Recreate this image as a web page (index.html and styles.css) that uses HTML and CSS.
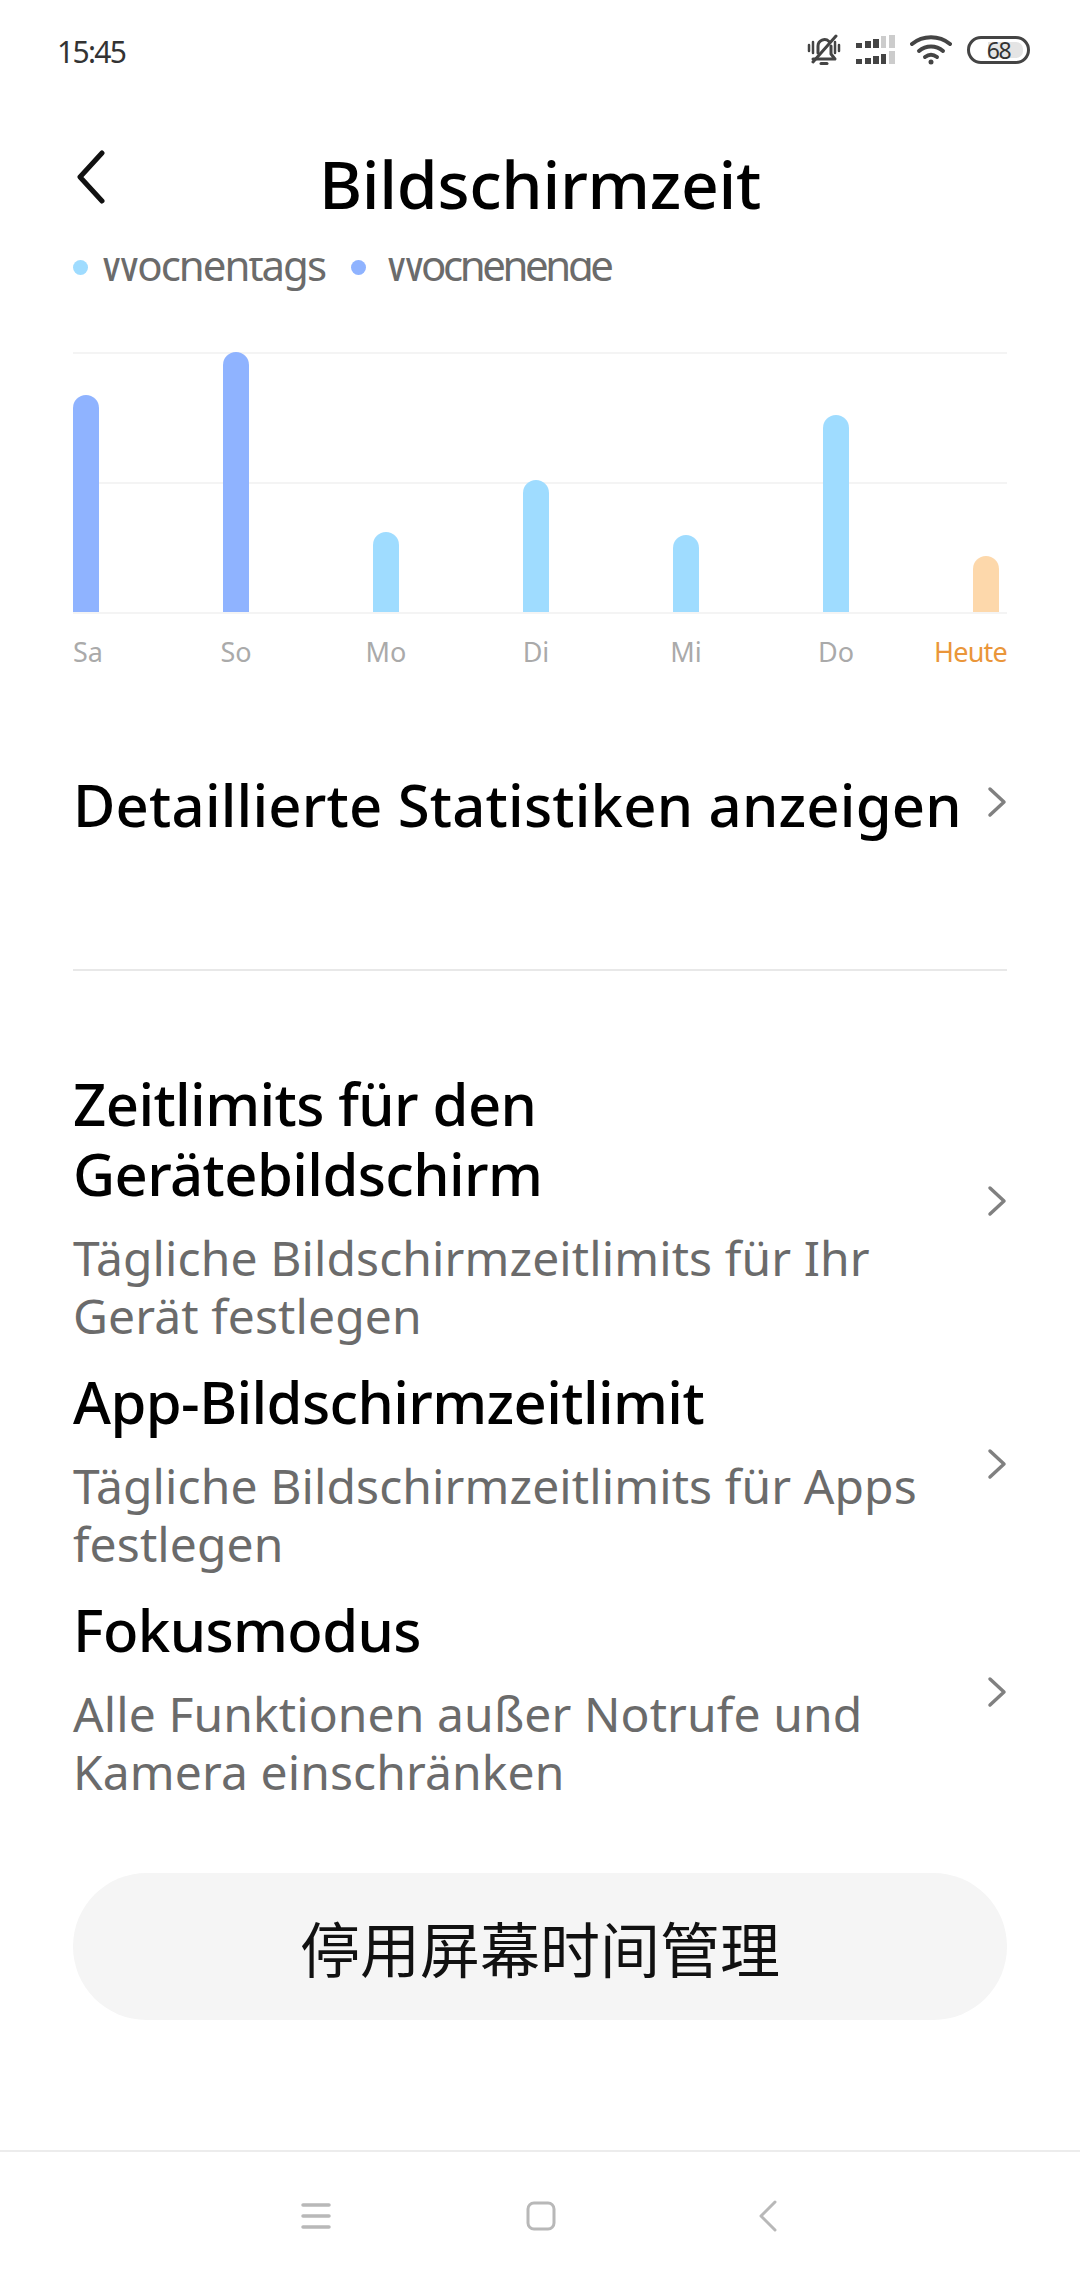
FILE: index.html
```html
<!DOCTYPE html>
<html lang="de">
<head>
    <meta charset="UTF-8">
    <title>Bildschirmzeit</title>
    <link rel="stylesheet" href="styles.css">
</head>
<body>
    <div class="page">
        <div class="status-bar">
            <span class="time">15:45</span>
            <div class="status-icons">
                <svg class="icon-bell" width="34" height="32" viewBox="0 0 34 32" fill="none" stroke="#444" stroke-width="3" stroke-linecap="round" stroke-linejoin="round">
                    <path d="M11 19v-7a6.500 6.500 0 0 1 11-4.500M24 12v8l4 5H6"/>
                    <path d="M6 28 29 2"/>
                    <path d="M14 29.500h6"/>
                    <path d="M2 11v6M32 11v6M6 8v11M28 8v11" stroke-width="2.500"/>
                </svg>
                <svg class="icon-signal" width="39" height="30" viewBox="0 0 39 30">
                    <rect x="0" y="8" width="6" height="5" fill="#444"/><rect x="9" y="6" width="6" height="7" fill="#444"/><rect x="17" y="4" width="6" height="9" fill="#444"/><rect x="25" y="1" width="5" height="12" fill="#ccc"/><rect x="33" y="0" width="6" height="13" fill="#ccc"/>
                    <rect x="0" y="24" width="6" height="5" fill="#444"/><rect x="9" y="23" width="6" height="6" fill="#444"/><rect x="17" y="21" width="6" height="8" fill="#444"/><rect x="25" y="19" width="5" height="10" fill="#444"/><rect x="33" y="16" width="6" height="13" fill="#ccc"/>
                </svg>
                <svg class="icon-wifi" width="42" height="31" viewBox="0 0 42 31" fill="none" stroke="#444" stroke-width="4" stroke-linecap="round">
                    <path d="M2 10c11-9 27-9 38 0"/>
                    <path d="M9 17c7-6 17-6 24 0"/>
                    <path d="M15 23c4-3 8-3 12 0"/>
                    <circle cx="21" cy="28" r="2.500" fill="#444" stroke="none"/>
                </svg>
                <div class="battery"><span class="battery-fill"></span><span class="battery-num">68</span></div>
            </div>
        </div>

        <header class="title-bar">
            <svg class="back" width="30" height="54" viewBox="0 0 30 54" fill="none" stroke="#111" stroke-width="5" stroke-linecap="round" stroke-linejoin="round">
                <path d="M27 3 5 27l22 24"/>
            </svg>
            <h1>Bildschirmzeit</h1>
        </header>

        <main class="content">
            <div class="legend">
                <span class="dot dot-week"></span><span class="legend-label">Wochentags</span>
                <span class="dot dot-weekend"></span><span class="legend-label legend-label-end">Wochenende</span>
            </div>

            <div class="chart">
                <div class="bar weekend" style="height: 217px"></div>
                <div class="bar weekend" style="height: 260px"></div>
                <div class="bar weekday" style="height: 80px"></div>
                <div class="bar weekday" style="height: 132px"></div>
                <div class="bar weekday" style="height: 77px"></div>
                <div class="bar weekday" style="height: 197px"></div>
                <div class="bar today" style="height: 56px"></div>
            </div>
            <div class="days">
                <span>Sa</span><span>So</span><span>Mo</span><span>Di</span><span>Mi</span><span>Do</span><span class="day-today">Heute</span>
            </div>

            <a class="stats-row">
                <span class="row-title">Detaillierte Statistiken anzeigen</span>
                <svg class="chevron" width="20" height="32" viewBox="0 0 20 32" fill="none" stroke="#808080" stroke-width="3.500" stroke-linecap="round" stroke-linejoin="round"><path d="M3 3l14 13L3 29"/></svg>
            </a>

            <div class="divider"></div>

            <div class="limits">
                <a class="limit-row">
                    <div class="row-text">
                        <div class="row-title">Zeitlimits für den Gerätebildschirm</div>
                        <div class="row-sub">Tägliche Bildschirmzeitlimits für Ihr Gerät festlegen</div>
                    </div>
                    <svg class="chevron" width="20" height="32" viewBox="0 0 20 32" fill="none" stroke="#808080" stroke-width="3.500" stroke-linecap="round" stroke-linejoin="round"><path d="M3 3l14 13L3 29"/></svg>
                </a>
                <a class="limit-row">
                    <div class="row-text">
                        <div class="row-title">App-Bildschirmzeitlimit</div>
                        <div class="row-sub">Tägliche Bildschirmzeitlimits für Apps festlegen</div>
                    </div>
                    <svg class="chevron" width="20" height="32" viewBox="0 0 20 32" fill="none" stroke="#808080" stroke-width="3.500" stroke-linecap="round" stroke-linejoin="round"><path d="M3 3l14 13L3 29"/></svg>
                </a>
                <a class="limit-row">
                    <div class="row-text">
                        <div class="row-title">Fokusmodus</div>
                        <div class="row-sub">Alle Funktionen außer Notrufe und Kamera einschränken</div>
                    </div>
                    <svg class="chevron" width="20" height="32" viewBox="0 0 20 32" fill="none" stroke="#808080" stroke-width="3.500" stroke-linecap="round" stroke-linejoin="round"><path d="M3 3l14 13L3 29"/></svg>
                </a>
            </div>

            <button class="btn-disable">停用屏幕时间管理</button>
        </main>

        <nav class="nav-bar">
            <svg width="30" height="26" viewBox="0 0 30 26" fill="none" stroke="#b8b8b8" stroke-width="3.500" stroke-linecap="round"><path d="M2 2h26M2 13h26M2 24h26"/></svg>
            <svg width="30" height="30" viewBox="0 0 30 30" fill="none" stroke="#b8b8b8" stroke-width="3"><rect x="2" y="2" width="26" height="26" rx="6"/></svg>
            <svg width="18" height="32" viewBox="0 0 18 32" fill="none" stroke="#b8b8b8" stroke-width="3" stroke-linecap="round" stroke-linejoin="round"><path d="M16 2 2 16l14 14"/></svg>
        </nav>
    </div>
</body>
</html>
```

FILE: styles.css
```css
:root {
    --side: 73px;
    --text-grey: #6b6b6b;
    --grid-line: #f4f4f4;
}

* {
    box-sizing: border-box;
}

body {
    margin: 0;
    background-color: #fff;
    font-family: "Noto Sans", "Noto Sans CJK SC", sans-serif;
    color: #000;
}

.page {
    width: 1080px;
    height: 2280px;
    display: flex;
    flex-direction: column;
    overflow: hidden;
}

/* status bar */
.status-bar {
    height: 70px;
    flex: none;
    display: flex;
    justify-content: space-between;
    align-items: center;
    padding: 0 50px 0 57px;
}

.time {
    font-size: 30px;
    color: #333;
    letter-spacing: -1.7px;
    padding-top: 32px;
}

.status-icons {
    display: flex;
    align-items: center;
    gap: 15px;
    padding-top: 29px;
}

.battery {
    position: relative;
    width: 63px;
    height: 28px;
    border: 3px solid #444;
    border-radius: 14px;
    text-align: center;
}

.battery-fill {
    position: absolute;
    left: 18px;
    right: 4px;
    top: 3px;
    bottom: 3px;
    border-radius: 0 7px 7px 0;
    background-color: #e4e4e4;
}

.battery-num {
    position: relative;
    font-size: 23px;
    line-height: 22px;
    letter-spacing: -1.5px;
    color: #333;
    display: block;
}

/* title */
.title-bar {
    height: 188px;
    flex: none;
    position: relative;
    display: flex;
    justify-content: center;
    align-items: flex-start;
    padding-top: 73px;
}

.title-bar h1 {
    margin: 0;
    font-size: 66px;
    font-weight: 500;
    letter-spacing: -0.3px;
    line-height: 80px;
}

.back {
    position: absolute;
    left: 75px;
    top: 80px;
}

/* scrolled content */
.content {
    flex: 1;
    overflow: hidden;
    padding: 0 var(--side);
}

.legend {
    display: flex;
    align-items: center;
    height: 40px;
    margin-top: -11px;
    margin-bottom: 65px;
}

.legend-label {
    font-size: 42px;
    letter-spacing: -2px;
    color: var(--text-grey);
    margin-right: 26px;
    margin-bottom: 6px;
}

.legend-label-end {
    letter-spacing: -3.4px;
}

.dot {
    width: 15px;
    height: 15px;
    border-radius: 50%;
    margin-right: 13px;
}

.dot-week {
    background-color: #9fdcff;
}

.dot-weekend {
    margin-right: 20px;
    background-color: #8fb3ff;
}

.chart {
    height: 262px;
    position: relative;
    display: flex;
    justify-content: space-between;
    align-items: flex-end;
    padding-right: 8px;
    border-top: 2px solid var(--grid-line);
    border-bottom: 2px solid var(--grid-line);
}

.chart::before {
    content: "";
    position: absolute;
    left: 0;
    right: 0;
    top: 128px;
    height: 2px;
    background-color: var(--grid-line);
}

.bar {
    position: relative;
    width: 26px;
    border-radius: 13px 13px 0 0;
}

.bar.weekend {
    background-color: #8fb3ff;
}

.bar.weekday {
    background-color: #9fdcff;
}

.bar.today {
    background-color: #fdd8ab;
}

.days {
    display: grid;
    grid-template-columns: repeat(7, 26px);
    justify-content: space-between;
    padding-right: 8px;
    margin-top: 21px;
    font-size: 27px;
    line-height: 34px;
    color: #aaa;
}

.days span {
    justify-self: center;
    white-space: nowrap;
}

.days span:first-child {
    justify-self: start;
}

.days .day-today {
    justify-self: end;
    margin-right: -8px;
    letter-spacing: -0.8px;
    color: #ea963a;
}

.stats-row {
    display: flex;
    justify-content: space-between;
    align-items: center;
    margin-top: 101px;
    height: 70px;
}

.stats-row .row-title {
    letter-spacing: 0.2px;
}

.stats-row .chevron {
    margin-bottom: 6px;
}

.row-title {
    font-size: 58px;
    font-weight: 500;
    letter-spacing: -0.6px;
    line-height: 70px;
    color: #000;
}

.chevron {
    flex: none;
}

.divider {
    height: 2px;
    margin-top: 129px;
    background-color: #e8e8e8;
}

.limits {
    margin-top: 98px;
    display: flex;
    flex-direction: column;
    gap: 22px;
}

.limit-row {
    display: flex;
    align-items: center;
    justify-content: space-between;
    gap: 24px;
}

.limit-row .chevron {
    margin-bottom: 12px;
}

.row-text {
    flex: 1;
}

.row-sub {
    font-size: 48px;
    line-height: 58px;
    letter-spacing: 0.1px;
    color: var(--text-grey);
    margin-top: 20px;
}

.btn-disable {
    display: block;
    width: 100%;
    height: 147px;
    margin-top: 72px;
    border: none;
    border-radius: 74px;
    background-color: #f5f5f5;
    font-family: "Noto Sans CJK SC", sans-serif;
    font-size: 60px;
    color: #111;
}

/* nav */
.nav-bar {
    height: 130px;
    flex: none;
    border-top: 2px solid #ececec;
    display: flex;
    justify-content: center;
    align-items: center;
    gap: 195px;
    padding-right: 2px;
}

.nav-bar svg:last-child {
    margin-left: 8px;
}
```
